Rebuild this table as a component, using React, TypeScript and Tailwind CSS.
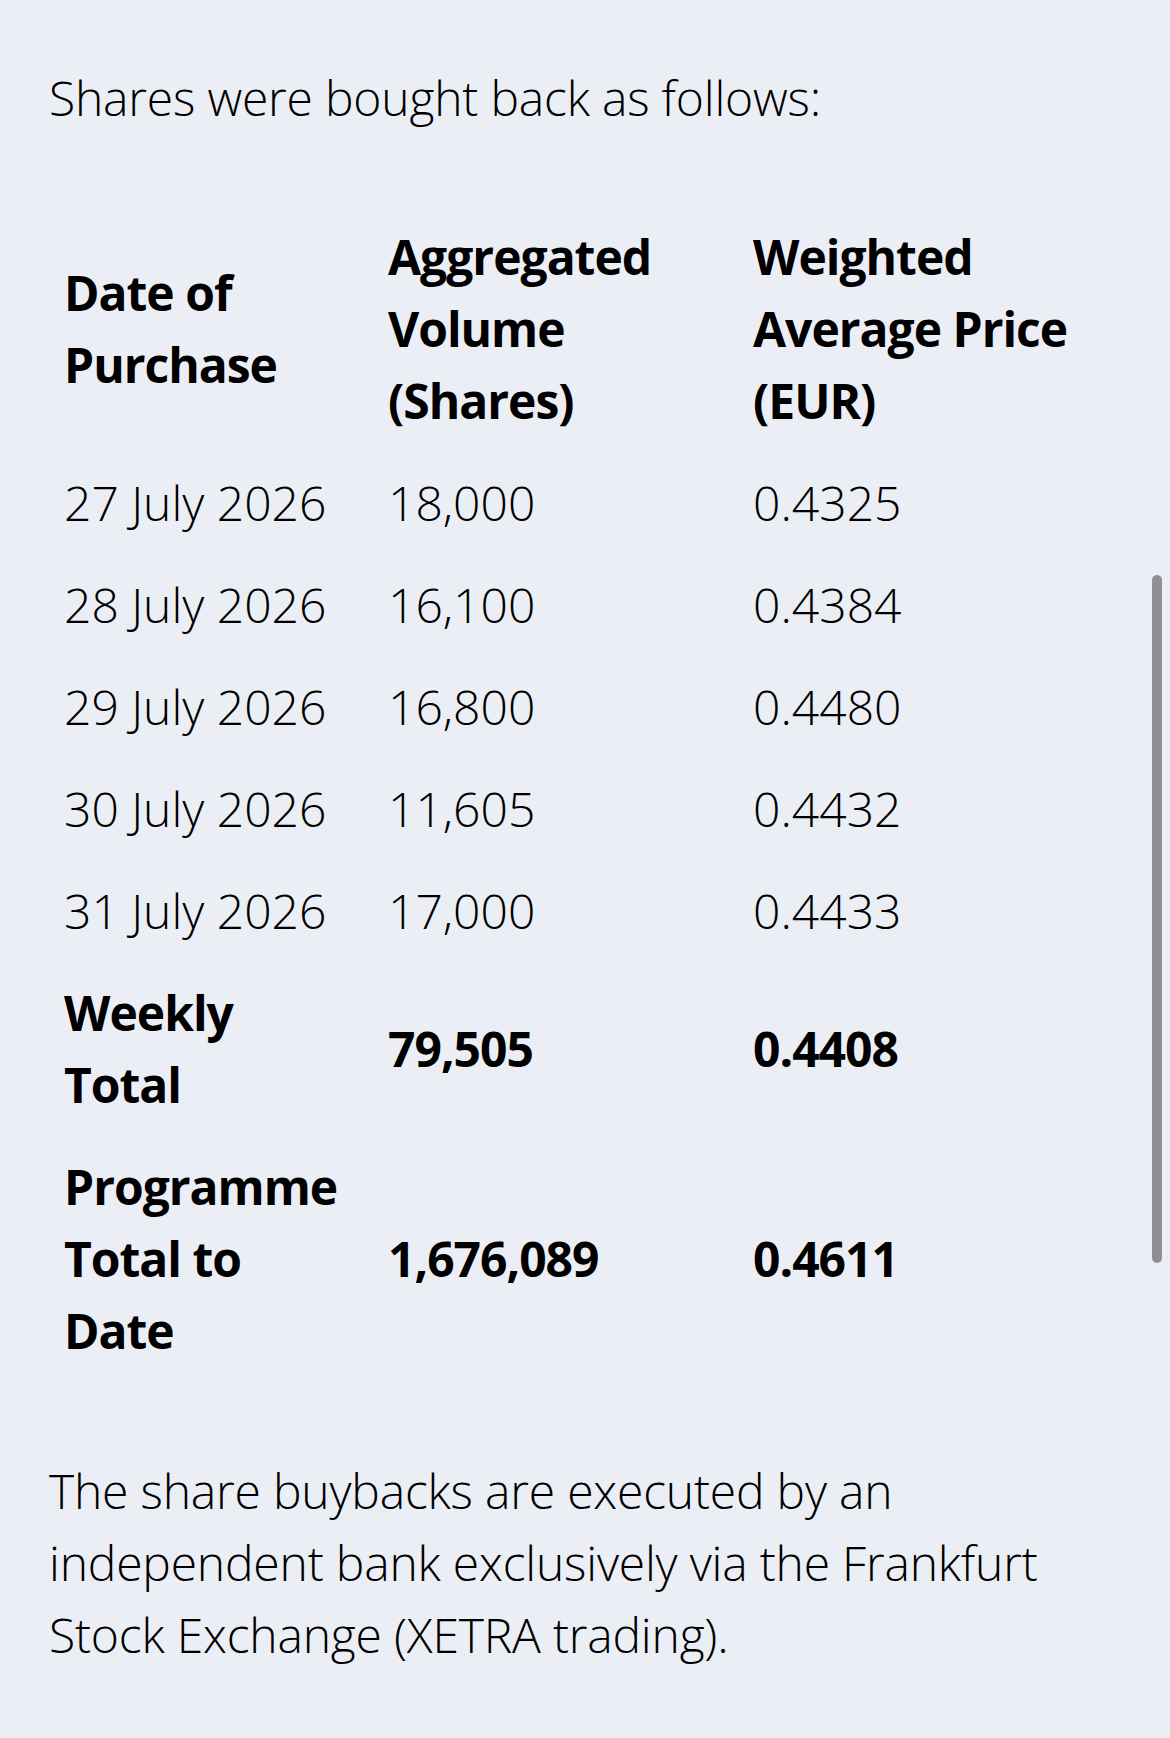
import React from "react";

const rows = [
  ["27 July 2026", "18,000", "0.4325"],
  ["28 July 2026", "16,100", "0.4384"],
  ["29 July 2026", "16,800", "0.4480"],
  ["30 July 2026", "11,605", "0.4432"],
  ["31 July 2026", "17,000", "0.4433"],
];

export default function App() {
  return (
    <div
      className="relative min-h-[1738px] bg-[#eceef5] text-black"
      style={{ fontFamily: '"Open Sans", "Noto Sans", sans-serif' }}
    >
      <div className="px-[49px] pt-[62px] pb-[80px]">
        <p className="text-[48px] leading-[72px] font-light tracking-[-0.2px]">
          Shares were bought back as follows:
        </p>
        <table className="mt-[72px] w-full border-collapse text-[48px] leading-[72px]">
          <thead>
            <tr className="font-bold text-left align-middle tracking-[-1px]">
              <th className="w-[324px] px-[15px] py-[15px] font-bold">Date of Purchase</th>
              <th className="w-[365px] px-[15px] py-[15px] font-bold">Aggregated Volume (Shares)</th>
              <th className="px-[15px] py-[15px] font-bold">Weighted Average Price (EUR)</th>
            </tr>
          </thead>
          <tbody className="font-light">
            {rows.map((r) => (
              <tr key={r[0]}>
                <td className="px-[15px] py-[15px] whitespace-nowrap">{r[0]}</td>
                <td className="px-[15px] py-[15px]">{r[1]}</td>
                <td className="px-[15px] py-[15px]">{r[2]}</td>
              </tr>
            ))}
            <tr className="font-bold tracking-[-1px]">
              <td className="px-[15px] py-[15px]">Weekly Total</td>
              <td className="px-[15px] py-[15px]">79,505</td>
              <td className="px-[15px] py-[15px]">0.4408</td>
            </tr>
            <tr className="font-bold tracking-[-1px]">
              <td className="px-[15px] py-[15px]">Programme Total to Date</td>
              <td className="px-[15px] py-[15px]">1,676,089</td>
              <td className="px-[15px] py-[15px]">0.4611</td>
            </tr>
          </tbody>
        </table>
        <p className="mt-[73px] text-[48px] leading-[72px] font-light tracking-[-0.2px]">
          The share buybacks are executed by an independent bank exclusively via the Frankfurt Stock Exchange (XETRA trading).
        </p>
      </div>
      <div className="absolute left-[1152px] top-[575px] h-[688px] w-[10px] rounded-full bg-[#8e8e93]" />
    </div>
  );
}
